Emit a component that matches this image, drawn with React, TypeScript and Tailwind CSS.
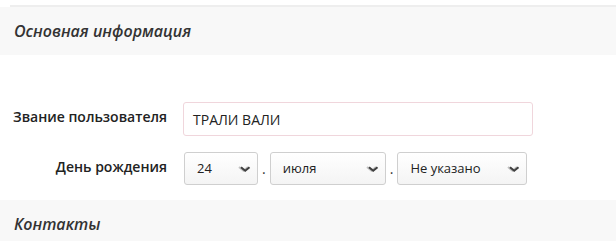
import { ReactNode } from "react";

function Arrow() {
  return (
    <svg width="13" height="8" viewBox="0 0 13 8" className="shrink-0">
      <path d="M1 2 L5.5 5.8 L10 2" fill="none" stroke="#c2c2c2" strokeWidth="2" />
      <path d="M3 2.2 L7.2 5.8 L11.5 2.2" fill="none" stroke="#3f3f3f" strokeWidth="2" />
    </svg>
  );
}

function Select({ value, width }: { value: string; width: string }) {
  return (
    <div
      className={`${width} h-[33px] flex items-center justify-between pl-[12px] pr-[6px] border border-[#cfcfcf] rounded-[3px] bg-gradient-to-b from-white to-[#f4f4f4] text-[13px] text-[#222]`}
    >
      <span>{value}</span>
      <Arrow />
    </div>
  );
}

function Section({ title, children }: { title: string; children?: ReactNode }) {
  return (
    <div className="bg-[#f8f8f8] h-[48px] flex items-center px-[14px]">
      <h2 className="italic font-semibold text-[16px] text-[#333]">{title}</h2>
      {children}
    </div>
  );
}

export default function App() {
  return (
    <div
      className="w-[616px] h-[241px] overflow-hidden bg-white"
      style={{ fontFamily: '"Open Sans", "Noto Sans", sans-serif' }}
    >
      <div className="h-[5px]" />
      <div className="ml-[10px] h-[2px] bg-[#eeeeee]" />
      <Section title="Основная информация" />
      <div className="pt-[47px] pb-[15px] flex flex-col gap-[16px]">
        <div className="flex items-center">
          <label className="w-[168px] text-right font-semibold text-[14px] text-[#222] pr-[1px] pb-[6px]">
            Звание пользователя
          </label>
          <div className="ml-[15px] w-[350px] h-[34px] flex items-center px-[9px] border border-[#f0d6dc] rounded-[3px] text-[14px] text-[#222]">
            ТРАЛИ ВАЛИ
          </div>
        </div>
        <div className="flex items-center">
          <label className="w-[168px] text-right font-semibold text-[14px] text-[#222] pr-[1px] pb-[5px]">
            День рождения
          </label>
          <div className="ml-[16px] flex items-end gap-[4px]">
            <Select value="24" width="w-[74px]" />
            <span className="text-[14px] text-[#333] pb-[6px]">.</span>
            <Select value="июля" width="w-[116px]" />
            <span className="text-[14px] text-[#333] pb-[6px]">.</span>
            <Select value="Не указано" width="w-[130px]" />
          </div>
        </div>
      </div>
      <Section title="Контакты" />
    </div>
  );
}
